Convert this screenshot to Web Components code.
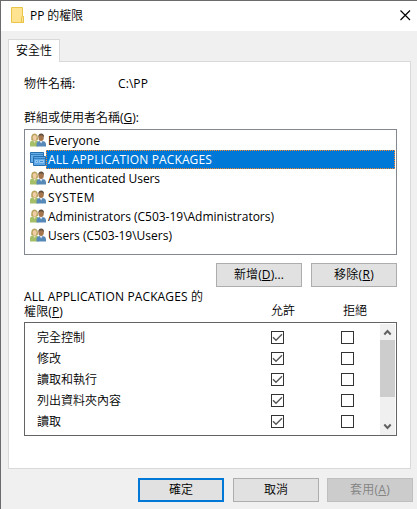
<!DOCTYPE html>
<html lang="zh-Hant">
<head>
<meta charset="utf-8">
<title>PP 的權限</title>
<style>
html,body{margin:0;height:100%;overflow:hidden;background:#f0f0f0}
body{font:12px/16px "Open Sans","Noto Sans CJK TC DemiLight","Noto Sans CJK TC Light","Noto Sans CJK TC",sans-serif;color:#000}
u{text-decoration:underline;text-underline-offset:1px;text-decoration-thickness:1px}
.form{display:flex;flex-direction:column;padding:14px 13px 0 15px}
.object{display:flex;height:16px}
.object fit-text:first-child{width:94px;flex:none}
.group{margin-top:18px;height:16px;margin-bottom:3px}
.actions{display:flex;justify-content:flex-end;gap:9px;margin-top:8px}
.heads{display:grid;grid-template-columns:1fr 72px 54px;align-items:end;height:32px;margin:0 0 3px;line-height:15px}
.heads .name{display:flex;flex-direction:column}
.heads>span{position:relative;top:-1px}
.foot{display:flex;justify-content:flex-end;gap:9px;padding:9px 4px 0 0}
.foot push-button:last-child{margin-left:-1px}
</style>
</head>
<body>
<dialog-window>
  <fit-text slot="title" w="53">PP 的權限</fit-text>
  <tab-panel label="安全性">
    <div class="form">
      <div class="object"><fit-text>物件名稱:</fit-text><fit-text w="30">C:\PP</fit-text></div>
      <div class="group"><fit-text w="115">群組或使用者名稱(<u>G</u>):</fit-text></div>
      <principal-list>
        <principal-row w="52">Everyone</principal-row>
        <principal-row w="164" selected>ALL APPLICATION PACKAGES</principal-row>
        <principal-row w="112">Authenticated Users</principal-row>
        <principal-row w="47">SYSTEM</principal-row>
        <principal-row w="226">Administrators (C503-19\Administrators)</principal-row>
        <principal-row w="124">Users (C503-19\Users)</principal-row>
      </principal-list>
      <div class="actions">
        <push-button><fit-text w="50">新增(<u>D</u>)...</fit-text></push-button>
        <push-button><fit-text w="40">移除(<u>R</u>)</fit-text></push-button>
      </div>
      <div class="heads">
        <div class="name"><fit-text w="179">ALL APPLICATION PACKAGES 的</fit-text><fit-text w="39">權限(<u>P</u>)</fit-text></div>
        <span>允許</span><span>拒絕</span>
      </div>
      <permission-list>
        <permission-row allow>完全控制</permission-row>
        <permission-row allow>修改</permission-row>
        <permission-row allow>讀取和執行</permission-row>
        <permission-row allow>列出資料夾內容</permission-row>
        <permission-row allow>讀取</permission-row>
      </permission-list>
    </div>
  </tab-panel>
  <div class="foot">
    <push-button primary>確定</push-button>
    <push-button>取消</push-button>
    <push-button disabled><fit-text w="40">套用(<u>A</u>)</fit-text></push-button>
  </div>
</dialog-window>
<script>
const define = (name, html, setup) => customElements.define(name, class extends HTMLElement {
  connectedCallback() {
    if (this.shadowRoot) return;
    const content = typeof html === 'function' ? html(this) : html;
    this.attachShadow({mode: 'open'}).innerHTML = content;
    if (setup) setup(this, this.shadowRoot);
  }
});

define('dialog-window', `<style>
:host{display:flex;flex-direction:column;box-sizing:border-box;width:417px;height:509px;border-top:1px solid #6b6a6c;border-left:1px solid #6b6a6c;background:#f0f0f0}
header{display:flex;align-items:center;height:30px;box-sizing:border-box;background:#fff;padding:0 6px 0 10px}
.folder{width:13px;height:16px;margin:0 6px 2px 0}
.close{width:11px;height:11px;margin:0 0 2px auto}
main{padding:8px 0 0 7px}
</style>
<header>
<svg class="folder" viewBox="0 0 13 16"><path d="M.5.5h11v9h1v6H.5z" fill="#ffe391" stroke="#e9c54b"/><path d="M10.500 15V10.500q0-1 1-1h1v6z" fill="#ffe391" stroke="#e9c54b"/></svg>
<slot name="title"></slot>
<svg class="close" viewBox="0 0 11 11"><path d="M.5.5l9.500 9.500M10 .5L.5 10" stroke="#000" stroke-width="1.15" fill="none"/></svg>
</header><main><slot></slot></main>`);

define('tab-panel', `<style>
:host{display:block;width:403px}
.tab{box-sizing:border-box;width:52px;height:23px;border:1px solid #d9d9d9;border-bottom:0;background:#fff;position:relative;z-index:1;padding:3px 0 0 7px;white-space:nowrap}
.panel{box-sizing:border-box;height:408px;margin-top:-1px;border:1px solid #d9d9d9;background:#fff}
</style><div class="tab"></div><div class="panel"><slot></slot></div>`, (el, root) => {
  root.querySelector('.tab').textContent = el.getAttribute('label');
});

define('principal-list', `<style>:host{display:block;box-sizing:border-box;height:126px;border:1px solid #828790;padding:1px;background:#fff}</style><slot></slot>`);

const PEOPLE = `<svg viewBox="0 0 16 16">
<path d="M0 13.500v-4Q.2 7.800 3 7.300h3q2.300.5 2.500 2.200v4z" fill="#a5bf69"/>
<path d="M3 7.200h3L4.700 10z" fill="#f4dcc0"/>
<path d="M1.200 6.800Q.8.600 4.500.500t3.500 6.300L6.500 7.500h-4z" fill="#b9a45f"/>
<ellipse cx="4.700" cy="4.600" rx="2" ry="2.700" fill="#f0cda5"/>
<path d="M6.500 13.500v-2.800q.3-2.300 3-2.700h3.200q3 .4 3.300 2.700v2.800z" fill="#5688b8"/>
<path d="M9.600 8h3l-1.500 2.500z" fill="#dfe9f2"/>
<ellipse cx="11.100" cy="4.500" rx="2.700" ry="3.600" fill="#a5764d"/>
<path d="M8.300 4Q8.300.500 11.200.5t2.800 3.700q-1-2-2.800-2-1.900 0-2.900 1.800z" fill="#61503f"/>
</svg>`;
const PACKAGE = `<svg viewBox="0 0 16 16" fill="none" stroke="#286fae">
<path d="M.5.500h13v10H.5z" fill="#65aeea"/><path d="M.5 2.500h13" stroke="#347fc0"/>
<path d="M3.500 4.500h12v9h-12z" fill="#5aa6e6"/><path d="M4 6.500h11" stroke="#347fc0"/>
<path d="M5.500 8.500h2v2h-2zM9.500 8.500h4v2h-4z" fill="#3f8ed2" stroke="#a9d4f7" stroke-width=".8"/>
</svg>`;
define('principal-row', el => `<style>
:host{display:flex;height:19px;padding-left:4px}
svg{width:16px;height:16px;margin-top:2px;flex:none}
.label{flex:1;box-sizing:border-box;height:19px;padding-left:2px;line-height:19px}
:host([selected]) .label{color:#fff;background:#0078d7;outline:1px dotted #ff8728;outline-offset:-1px}
</style>${el.hasAttribute('selected') ? PACKAGE : PEOPLE}<div class="label"><fit-text w="${el.getAttribute('w')}">${el.textContent}</fit-text></div>`);

define('push-button', `<style>
:host{display:flex;align-items:center;justify-content:center;box-sizing:border-box;width:86px;height:24px;border:1px solid #adadad;background:#e1e1e1}
:host([primary]){border:2px solid #0078d7}
:host([disabled]){color:#838383;background:#ccc;border-color:#bfbfbf}
</style><slot></slot>`);

define('permission-list', `<style>
:host{display:flex;box-sizing:border-box;height:114px;border:1px solid #646464;background:#fff;padding:1px 1px 0 0}
.rows{flex:1;padding:3px 0 0 12px}
.bar{width:15px;display:flex;flex-direction:column;background:#f0f0f0}
.thumb{height:57px;background:#cdcdcd}
svg{width:15px;height:16px;flex:none}
.down{margin-top:auto}
</style><div class="rows"><slot></slot></div>
<div class="bar"><svg viewBox="0 0 15 16"><path d="M4.300 10.500L7.500 7l3.200 3.500" fill="none" stroke="#606060" stroke-width="2"/></svg>
<div class="thumb"></div>
<svg class="down" viewBox="0 0 15 16"><path d="M4.300 5.500L7.500 9l3.200-3.500" fill="none" stroke="#606060" stroke-width="2"/></svg></div>`);

define('permission-row', `<style>
:host{display:grid;grid-template-columns:234px 70px 1fr;align-items:center;height:21px}
i{box-sizing:border-box;width:13px;height:13px;border:1px solid #333;background:#fff;display:block}
svg{display:none;width:11px;height:11px}
:host([allow]) .allow svg{display:block}
</style><span><slot></slot></span><i class="allow"><svg viewBox="0 0 11 11"><path d="M1 5.300L4 8.300 10 2.300" fill="none" stroke="#555" stroke-width="1.400"/></svg></i><i></i>`);

// Adjusts letter spacing so a label takes the width given in "w".
define('fit-text', `<style>:host{display:inline-block;white-space:pre}span{display:inline-block}</style><span><slot></slot></span>`, (el, root) => {
  const w = +el.getAttribute('w');
  if (!w) return;
  const span = root.querySelector('span');
  const natural = span.getBoundingClientRect().width;
  span.style.letterSpacing = (w - natural) / el.textContent.length + 'px';
});
</script>
</body>
</html>
